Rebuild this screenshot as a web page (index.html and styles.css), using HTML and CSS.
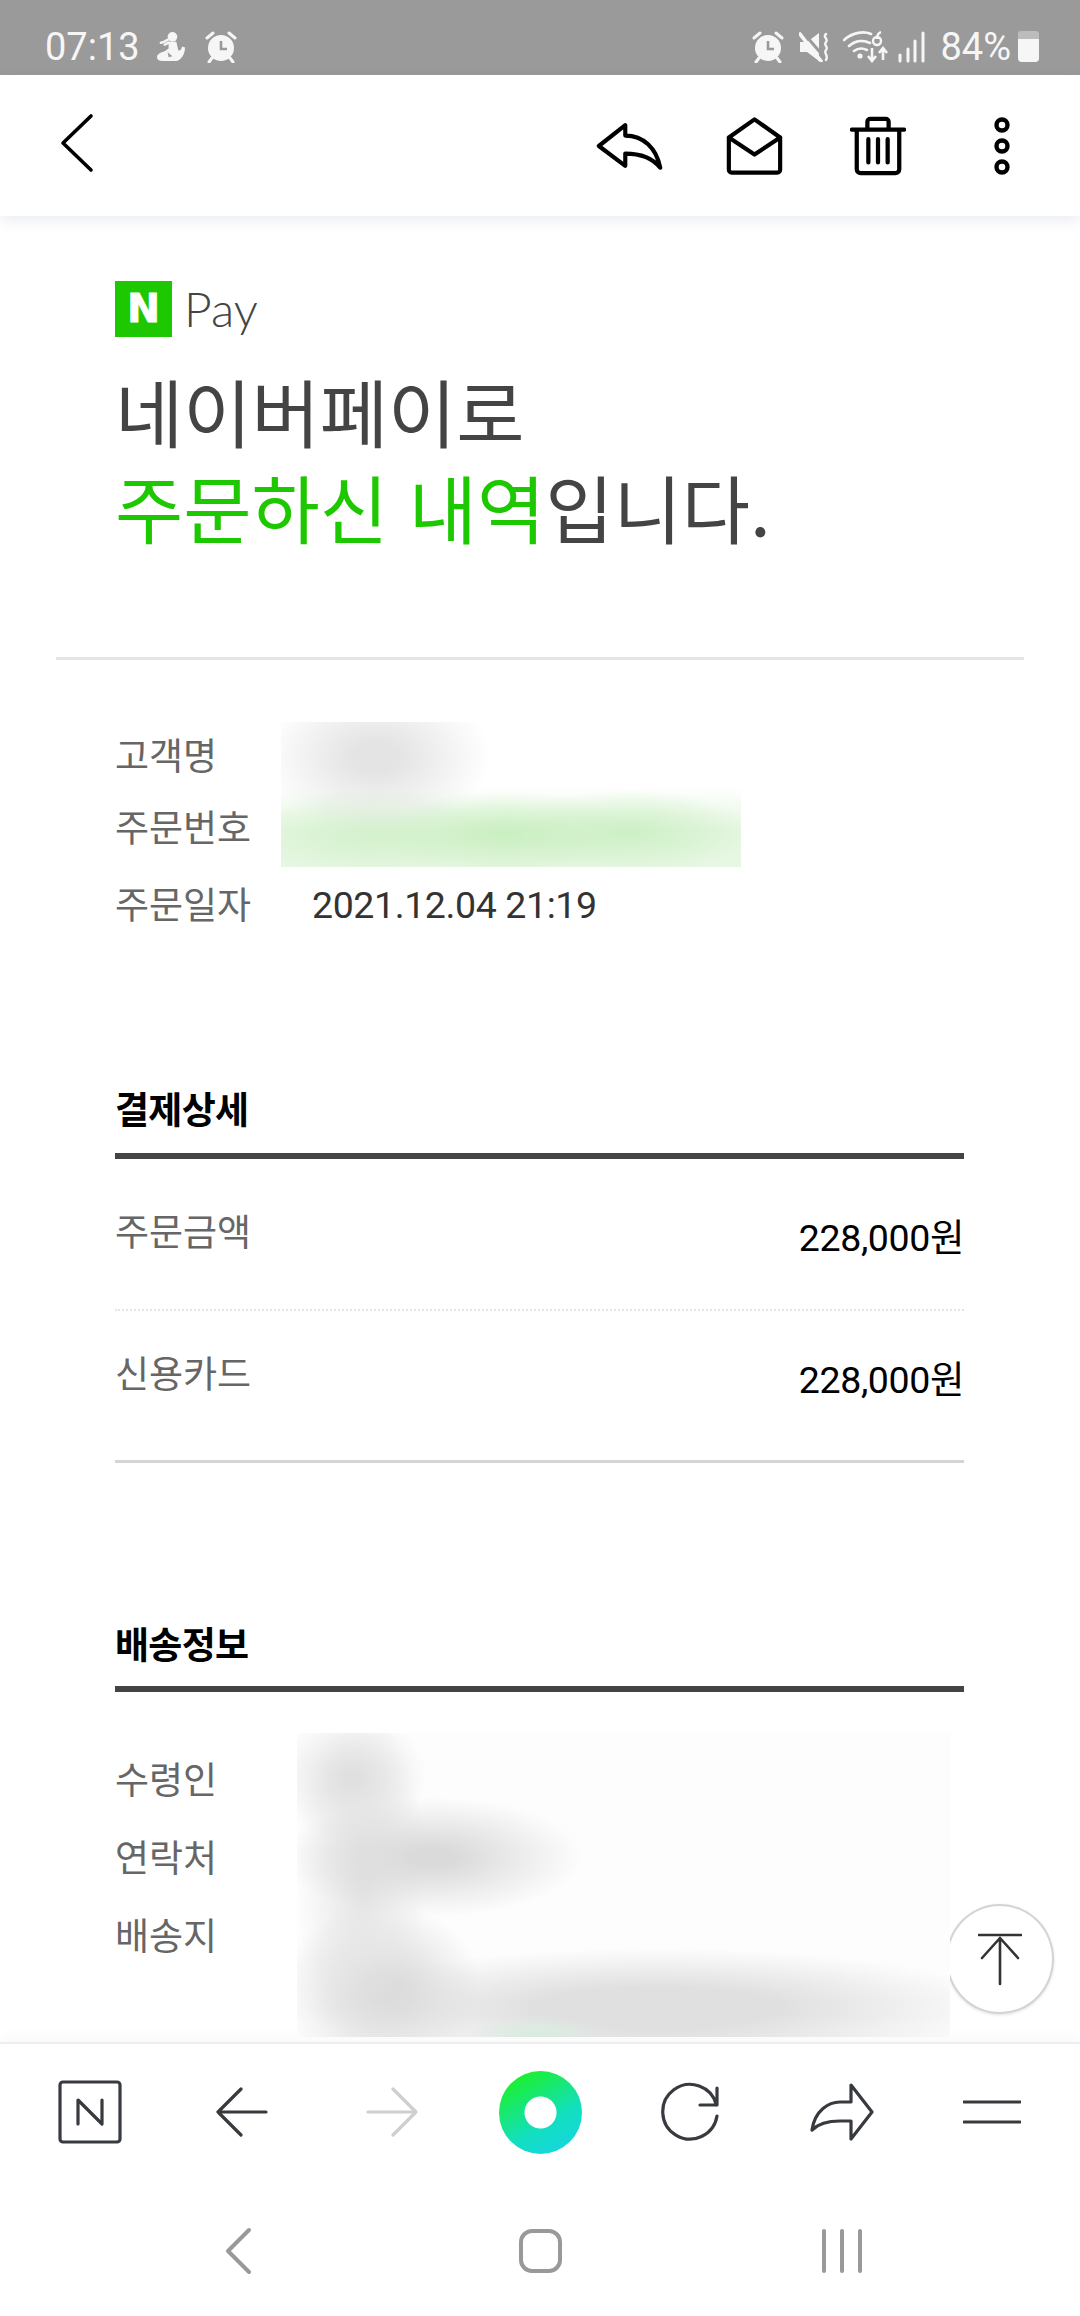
FILE: index.html
```html
<!DOCTYPE html>
<html lang="ko">
<head>
<meta charset="utf-8">
<title>네이버페이 주문 내역</title>
<link rel="stylesheet" href="styles.css">
</head>
<body>
<div class="phone">
  <header class="status">
    <div class="status-left">
      <span class="status-time">07:13</span>
      <svg class="ic-person" viewBox="0 0 30 32"><circle cx="16" cy="6" r="5" fill="currentColor"/><path d="M11 9c-3 2-5 3-7 3 M8 14l4-2" stroke="currentColor" stroke-width="2.6" fill="none" stroke-linecap="round"/><path d="M12 11h8l2 9c2 1 3-1 4-4l3 1c0 7-4 13-9 14H6c-4 0-6-2-6-4 0-3 4-5 8-6l4-3z" fill="currentColor"/><path d="M11 22l1 5 4-1z" fill="#9a9a9a"/></svg>
      <svg class="ic-alarm" viewBox="0 0 32 32"><use href="#alarm"/></svg>
    </div>
    <div class="status-right">
      <svg class="ic-alarm" viewBox="0 0 32 32"><g id="alarm"><circle cx="16" cy="17" r="13" fill="currentColor"/><path d="M2 7l6-5 M30 7l-6-5 M7 27l-3 4 M25 27l3 4" stroke="currentColor" stroke-width="3" stroke-linecap="round"/><path d="M16 10v8h6" fill="none" stroke="#9a9a9a" stroke-width="2.6"/></g></svg>
      <svg class="ic-mute" viewBox="0 0 30 30"><path d="M1 10h7L20 1v28L8 20H1z" fill="currentColor"/><path d="M2 -2L26 26" stroke="#9a9a9a" stroke-width="3"/><path d="M1 2l21 27" stroke="currentColor" stroke-width="3.600" stroke-linecap="round"/><path d="M27 2c-4 3 3 5 0 8s3 5 0 8 3 5 0 10" fill="none" stroke="currentColor" stroke-width="2.400" stroke-linecap="round"/></svg>
      <svg class="ic-wifi" viewBox="0 0 46 32"><path d="M1 9c9-8 20-9 27-6 M6 15c7-6 15-6 21-3 M11 20c4-3 9-3 13-1" fill="none" stroke="currentColor" stroke-width="2.600" stroke-linecap="round"/><circle cx="17" cy="25" r="2.600" fill="currentColor"/><path d="M34 8c0-4 1-6 4-7 M30 10a4 4 0 1 0 8 0 4 4 0 1 0-8 0" fill="none" stroke="currentColor" stroke-width="2.400"/><path d="M29 17v12 M25 25l4 5 4-5 M40 29V18 M36 22l4-5 4 5" fill="none" stroke="currentColor" stroke-width="2.600"/></svg>
      <svg class="ic-signal" viewBox="0 0 27 32"><path d="M2 24v6 M10 18v12 M17 10v20 M25 2v28" stroke="currentColor" stroke-width="3" stroke-linecap="round"/></svg>
      <span class="status-batt">84%</span>
      <span class="battery"><span class="battery-fill"></span></span>
    </div>
  </header>

  <nav class="toolbar">
    <button class="tool tool-back" aria-label="뒤로"><svg width="36" height="60" viewBox="0 0 36 60"><path d="M32 3L4 30l28 27" class="ink"/></svg></button>
    <div class="tool-group">
      <button class="tool" aria-label="답장"><svg width="68" height="48" viewBox="0 0 72 50"><path d="M3 25L31 3v11c19 0 33 13 37 34-7-9-18-15-37-15v13z" class="ink ink-b"/></svg></button>
      <button class="tool" aria-label="읽음"><svg width="57" height="60" viewBox="0 0 60 62"><path d="M3 22L30 3l27 19v34a3 3 0 0 1-3 3H6a3 3 0 0 1-3-3z M3 22l27 18 27-18" class="ink ink-b"/></svg></button>
      <button class="tool" aria-label="삭제"><svg width="56" height="60" viewBox="0 0 58 62"><path d="M2 14h54 M18 14V6a3 3 0 0 1 3-3h16a3 3 0 0 1 3 3v8 M7 14v41a4 4 0 0 0 4 4h36a4 4 0 0 0 4-4V14 M19 24v24 M29 24v24 M39 24v24" class="ink ink-b"/></svg></button>
      <button class="tool" aria-label="더보기"><svg width="20" height="60" viewBox="0 0 20 60"><circle cx="10" cy="9" r="5.500" class="ink ink-b"/><circle cx="10" cy="30" r="5.500" class="ink ink-b"/><circle cx="10" cy="51" r="5.500" class="ink ink-b"/></svg></button>
    </div>
  </nav>

  <main class="mail">
    <div class="brand">
      <span class="brand-mark">N</span>
      <span class="brand-pay">Pay</span>
    </div>
    <h1 class="title">네이버페이로<br><em>주문하신 내역</em>입니다.</h1>
    <hr class="divider">

    <section class="summary">
      <div class="labels labels-summary">
        <span>고객명</span>
        <span>주문번호</span>
        <span class="label-date">주문일자</span>
      </div>
      <div class="summary-values">
        <div class="redact redact-summary"></div>
        <span class="order-date">2021.12.04 21:19</span>
      </div>
    </section>

    <section class="pay">
      <h2 class="sec-title">결제상세</h2>
      <div class="pay-row pay-row-dotted">
        <span class="pay-label">주문금액</span>
        <span class="pay-value">228,000원</span>
      </div>
      <div class="pay-row pay-row-last">
        <span class="pay-label">신용카드</span>
        <span class="pay-value">228,000원</span>
      </div>
    </section>

    <section class="ship">
      <h2 class="sec-title">배송정보</h2>
      <div class="ship-body">
        <div class="labels labels-ship">
          <span>수령인</span>
          <span>연락처</span>
          <span>배송지</span>
        </div>
        <div class="redact redact-ship"></div>
      </div>
    </section>

    <button class="to-top" aria-label="맨 위로"><svg width="44" height="54" viewBox="0 0 44 54"><path d="M1 3h42 M22 52V6 M4 26L22 6l18 20" fill="none" stroke="#333" stroke-width="2.600" stroke-linecap="round" stroke-linejoin="round"/></svg></button>
  </main>

  <nav class="browser">
    <span class="bt"><svg width="64" height="64" viewBox="0 0 64 64"><rect x="2" y="2" width="60" height="60" rx="3" class="line"/><path d="M20 44V20l24 24V20" class="line"/></svg></span>
    <span class="bt bt-nudge"><svg width="52" height="50" viewBox="0 0 52 50"><path d="M25 2L2 25l23 23 M2 25h48" class="line"/></svg></span>
    <span class="bt bt-nudge"><svg width="52" height="50" viewBox="0 0 52 50"><path d="M27 2l23 23-23 23 M50 25H2" class="line line-off"/></svg></span>
    <span class="bt"><span class="green-ring"></span></span>
    <span class="bt"><svg width="60" height="60" viewBox="0 0 60 60"><path d="M57 34A27.300 27.300 0 1 1 56.500 23 M57 6v17H40" class="line"/></svg></span>
    <span class="bt bt-nudge"><svg width="64" height="58" viewBox="0 0 64 58"><path d="M2 47c3-20 17-28 28-28h11V2l21 27-21 27V38H30c-12 0-21 2-28 9z" class="line"/></svg></span>
    <span class="bt bt-nudge"><svg width="58" height="24" viewBox="0 0 58 24"><path d="M1 2h56 M1 22h56" class="line"/></svg></span>
  </nav>

  <nav class="system">
    <span class="sys"><svg width="28" height="48" viewBox="0 0 28 48"><path d="M25 3L4 24l21 21" class="sys-line"/></svg></span>
    <span class="sys"><span class="sys-home"></span></span>
    <span class="sys"><svg width="40" height="44" viewBox="0 0 40 44"><path d="M2 2v40 M20 2v40 M38 2v40" class="sys-line"/></svg></span>
  </nav>
</div>
</body>
</html>
```

FILE: styles.css
```css
* { box-sizing: border-box; }
html, body { margin: 0; padding: 0; background: #fff; }
body { font-family: Roboto, "Noto Sans CJK KR", sans-serif; }
button { border: 0; background: none; padding: 0; }
svg { display: block; }

.phone { width: 1080px; height: 2316px; display: flex; flex-direction: column; overflow: hidden; position: relative; }

.status { height: 75px; flex: none; background: #9a9a9a; color: #f6f6f6; display: flex; justify-content: space-between; align-items: center; padding: 0 41px 0 45px; font-size: 38px; line-height: 1; }
.status-left, .status-right { display: flex; align-items: center; height: 32px; margin-top: 18px; }
.ic-person { width: 29px; height: 31px; margin-left: 17px; }
.ic-alarm { width: 32px; height: 32px; color: #f6f6f6; }
.status-left .ic-alarm { margin-left: 19px; }
.ic-mute { width: 30px; height: 30px; margin-left: 15px; }
.ic-wifi { width: 46px; height: 32px; margin-left: 14px; }
.ic-signal { width: 27px; height: 32px; margin-left: 9px; }
.status-batt { margin-left: 15px; }
.battery { width: 21px; height: 31px; margin-left: 7px; background: #bcbcbc; border-radius: 3px 3px 4px 4px; display: flex; align-items: flex-end; }
.battery-fill { width: 100%; height: 23px; background: #f6f6f6; border-radius: 0 0 4px 4px; }

.toolbar { height: 141px; flex: none; background: #fff; display: flex; justify-content: space-between; align-items: center; padding-right: 15px; box-shadow: 0 4px 14px rgba(80, 90, 130, .12); position: relative; z-index: 3; }
.tool { width: 124px; height: 141px; display: flex; align-items: center; justify-content: center; }
.tool-back { width: 154px; padding-bottom: 6px; }
.tool-group { display: flex; margin-right: 1px; }
.ink { fill: none; stroke: #000; stroke-width: 3.6; stroke-linecap: round; stroke-linejoin: round; }
.ink-b { stroke-width: 4.4; }

.mail { flex: 1; min-height: 0; overflow: hidden; position: relative; padding: 65px 56px 0 56px; }
.brand { display: flex; align-items: center; gap: 12px; margin-left: 59px; height: 56px; }
.brand-mark { width: 57px; height: 56px; background: #1ec800; color: #fff; font: 700 39px/55px "DejaVu Sans", sans-serif; text-align: center; -webkit-text-stroke: 1px #fff; }
.brand-pay { font: 300 48px/56px Lato, sans-serif; color: #444; }
.title { margin: 25px 0 0 59px; font-family: "Noto Sans CJK KR", sans-serif; font-weight: 400; font-size: 74.2px; line-height: 96px; color: #444; }
.title em { font-style: normal; color: #1ec800; }
.divider { margin: 103px 0 0; height: 3px; border: 0; background: #e4e4e4; }

.labels { display: flex; flex-direction: column; font-family: "Noto Sans CJK KR", sans-serif; font-size: 37px; color: #666; line-height: 50px; }
.summary { display: flex; margin: 62px 0 0 59px; }
.labels-summary { width: 166px; gap: 22px; padding-top: 7px; }
.label-date { margin-top: 5px; }
.summary-values { display: flex; flex-direction: column; }
.redact { position: relative; z-index: 2; }
.redact-summary {
  width: 460px; height: 145px;
  background:
    radial-gradient(ellipse 115px 75px at 95px 35px, #e4e4e4 20%, rgba(228,228,228,0) 100%),
    radial-gradient(ellipse 130px 42px at 225px 112px, #c9efc0 0, rgba(201,239,192,0) 100%),
    radial-gradient(ellipse 120px 42px at 350px 110px, #cdf0c6 0, rgba(205,240,198,0) 100%),
    radial-gradient(ellipse 120px 45px at 90px 112px, #d3f1cc 0, rgba(211,241,204,0) 100%),
    linear-gradient(180deg, rgba(228,246,223,0) 45%, #e4f6df 75%, #e8f7e4 100%),
    #fff;
}
.order-date { font-size: 37.5px; line-height: 50px; letter-spacing: -.4px; color: #333; margin: 13px 0 0 31px; }

.pay { margin: 153px 0 0 59px; width: 849px; }
.sec-title { margin: 0; height: 76px; border-bottom: 6px solid #444; font-family: "Noto Sans CJK KR", sans-serif; font-size: 37px; line-height: 50px; font-weight: 700; color: #000; letter-spacing: -.7px; }
.pay-row { display: flex; justify-content: space-between; }
.pay-row-dotted { height: 152px; padding-top: 46px; border-bottom: 2px dotted #e4e4e4; }
.pay-row-last { height: 152px; padding-top: 36px; border-bottom: 3px solid #d5d5d5; }
.pay-label { font-family: "Noto Sans CJK KR", sans-serif; font-size: 37px; line-height: 50px; color: #666; }
.pay-value { font-family: Roboto, "Noto Sans CJK KR", sans-serif; font-size: 37.5px; line-height: 50px; color: #000; letter-spacing: -.4px; padding-top: 8px; }

.ship { margin: 155px 0 0 59px; width: 849px; }
.ship .sec-title { height: 74px; }
.ship-body { display: flex; margin-top: 41px; }
.labels-ship { width: 182px; gap: 28px; padding-top: 20px; }
.redact-ship {
  width: 653px; height: 304px;
  background:
    radial-gradient(ellipse 70px 22px at 240px 304px, #d8eee0 0, rgba(216,238,224,0) 100%),
    radial-gradient(ellipse 75px 65px at 55px 45px, #e0e0e0 10%, rgba(224,224,224,0) 100%),
    radial-gradient(ellipse 150px 60px at 135px 124px, #dadada 15%, rgba(218,218,218,0) 100%),
    radial-gradient(ellipse 65px 170px at 65px 150px, #e6e6e6 10%, rgba(230,230,230,0) 100%),
    radial-gradient(ellipse 100px 85px at 85px 255px, #d9d9d9 15%, rgba(217,217,217,0) 100%),
    radial-gradient(ellipse 350px 60px at 360px 275px, #e0e0e0 35%, rgba(224,224,224,0) 100%),
    #fdfdfd;
}

.to-top { position: absolute; left: 946px; top: 1688px; width: 108px; height: 110px; border-radius: 50%; background: #fff; border: 2px solid #d4d4d4; box-shadow: 0 1px 3px rgba(0,0,0,.12); display: flex; align-items: center; justify-content: center; z-index: 1; }

.browser { height: 168px; flex: none; background: #fff; border-top: 2px solid #eceef0; display: grid; grid-template-columns: repeat(7, 150px); padding: 0 15px 30px; align-items: center; position: relative; z-index: 3; box-shadow: 0 -6px 12px rgba(80, 90, 130, .03); }
.bt { display: flex; align-items: center; justify-content: center; }
.bt-nudge { padding-left: 3px; }
.line { fill: none; stroke: #373a3f; stroke-width: 3.2; stroke-linecap: round; stroke-linejoin: round; }
.line-off { stroke: #cfcfcf; }
.green-ring { width: 83px; height: 83px; border-radius: 50%; background: radial-gradient(circle at center, #fff 0 15.500px, transparent 16.500px), linear-gradient(150deg, #1cf02e 12%, #12dfc0 62%, #18d2ea 100%); }

.system { height: 106px; flex: none; background: #fff; display: grid; grid-template-columns: repeat(3, 302px); padding: 0 87px 24px; align-items: center; }
.sys { display: flex; align-items: center; justify-content: center; }
.sys-line { fill: none; stroke: #999; stroke-width: 4; stroke-linecap: round; stroke-linejoin: round; }
.sys-home { width: 43px; height: 44px; border: 4px solid #999; border-radius: 13px; }
```
